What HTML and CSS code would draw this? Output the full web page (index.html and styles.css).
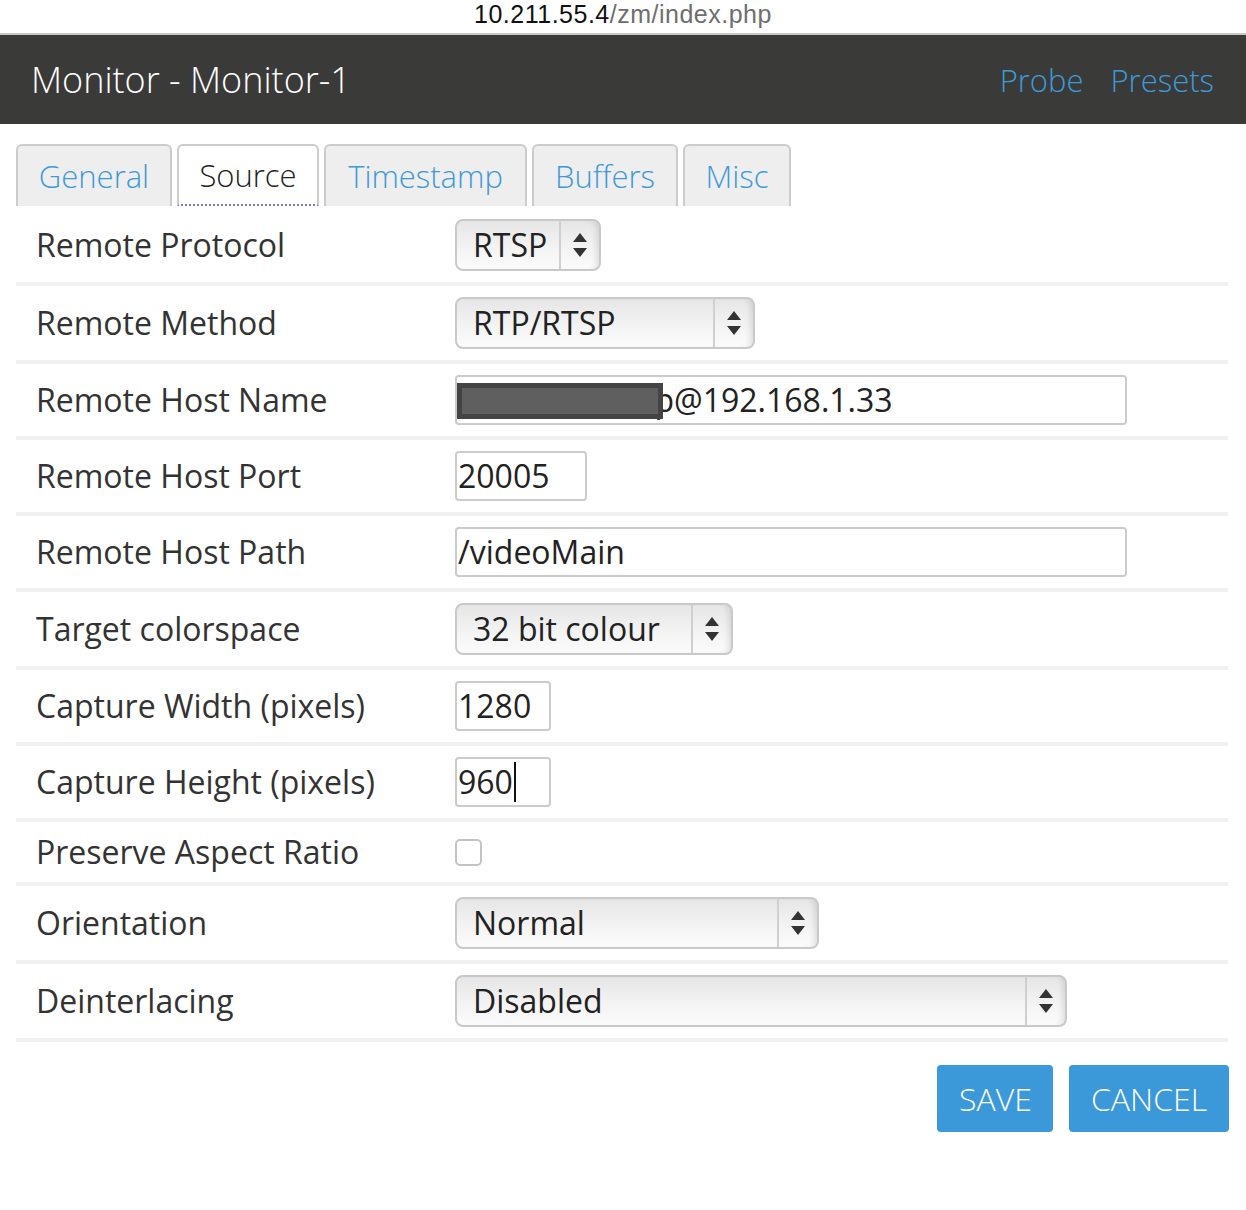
FILE: index.html
```html
<!DOCTYPE html>
<html lang="en">
<head>
<meta charset="utf-8">
<title>Monitor - Monitor-1</title>
<link rel="stylesheet" href="styles.css">
</head>
<body>
<div class="urlbar"><span class="host">10.211.55.4</span><span class="path">/zm/index.php</span></div>
<header class="topbar">
  <h1 class="title">Monitor - Monitor-1</h1>
  <nav class="actions"><a href="#">Probe</a><a href="#">Presets</a></nav>
</header>
<main class="content">
  <ul class="tabs">
    <li class="tab t-general">General</li>
    <li class="tab t-source active">Source</li>
    <li class="tab t-timestamp">Timestamp</li>
    <li class="tab t-buffers">Buffers</li>
    <li class="tab t-misc">Misc</li>
  </ul>
  <div class="rows">
    <div class="row">
      <div class="label">Remote Protocol</div>
      <div class="value"><div class="select w146"><span class="sel-text">RTSP</span><span class="sel-arrows"><svg width="14" height="24" viewBox="0 0 14 24"><path d="M7 0L14 9H0Z M0 15H14L7 24Z" fill="#333"/></svg></span></div></div>
    </div>
    <div class="row">
      <div class="label">Remote Method</div>
      <div class="value"><div class="select w300"><span class="sel-text">RTP/RTSP</span><span class="sel-arrows"><svg width="14" height="24" viewBox="0 0 14 24"><path d="M7 0L14 9H0Z M0 15H14L7 24Z" fill="#333"/></svg></span></div></div>
    </div>
    <div class="row">
      <div class="label">Remote Host Name</div>
      <div class="value"><div class="input w672 redact-wrap"><span class="redacted">p</span>@192.168.1.33<span class="redact-box"></span></div></div>
    </div>
    <div class="row">
      <div class="label">Remote Host Port</div>
      <div class="value"><div class="input w132">20005</div></div>
    </div>
    <div class="row">
      <div class="label">Remote Host Path</div>
      <div class="value"><div class="input w672">/videoMain</div></div>
    </div>
    <div class="row">
      <div class="label">Target colorspace</div>
      <div class="value"><div class="select w278"><span class="sel-text">32 bit colour</span><span class="sel-arrows"><svg width="14" height="24" viewBox="0 0 14 24"><path d="M7 0L14 9H0Z M0 15H14L7 24Z" fill="#333"/></svg></span></div></div>
    </div>
    <div class="row">
      <div class="label">Capture Width (pixels)</div>
      <div class="value"><div class="input w96">1280</div></div>
    </div>
    <div class="row">
      <div class="label">Capture Height (pixels)</div>
      <div class="value"><div class="input w96">960<span class="caret"></span></div></div>
    </div>
    <div class="row short">
      <div class="label">Preserve Aspect Ratio</div>
      <div class="value"><span class="checkbox"></span></div>
    </div>
    <div class="row">
      <div class="label">Orientation</div>
      <div class="value"><div class="select w364"><span class="sel-text">Normal</span><span class="sel-arrows"><svg width="14" height="24" viewBox="0 0 14 24"><path d="M7 0L14 9H0Z M0 15H14L7 24Z" fill="#333"/></svg></span></div></div>
    </div>
    <div class="row">
      <div class="label">Deinterlacing</div>
      <div class="value"><div class="select w612"><span class="sel-text">Disabled</span><span class="sel-arrows"><svg width="14" height="24" viewBox="0 0 14 24"><path d="M7 0L14 9H0Z M0 15H14L7 24Z" fill="#333"/></svg></span></div></div>
    </div>
  </div>
  <div class="buttons">
    <button class="btn save">SAVE</button>
    <button class="btn cancel">CANCEL</button>
  </div>
</main>
</body>
</html>
```
FILE: styles.css
```css
* { box-sizing: border-box; }
html, body { margin: 0; padding: 0; background: #fff; }
body { font-family: "Open Sans", "Liberation Sans", sans-serif; color: #333; }

.urlbar {
  height: 35px;
  border-bottom: 2px solid #c9c9c9;
  text-align: center;
  font-family: "Liberation Sans", Arial, sans-serif;
  font-size: 25px;
  line-height: 28px;
  letter-spacing: 0.5px;
}
.urlbar .host { color: #111; }
.urlbar .path { color: #6e6e6e; }

.topbar {
  height: 89px;
  background: #3a3a39;
  display: flex;
  align-items: center;
  justify-content: space-between;
  padding: 0 32px 0 31px;
}
.title {
  margin: 0;
  font-weight: 300;
  font-size: 36px;
  color: #fff;
}
.actions { display: flex; gap: 27px; }
.actions a {
  color: #3d9ad8;
  text-decoration: none;
  font-size: 31px;
  font-weight: 300;
}

.content { padding: 20px 18px 40px 16px; }

.tabs {
  list-style: none;
  margin: 0;
  padding: 0;
  display: flex;
  gap: 5px;
  height: 62px;
}
.tab {
  height: 62px;
  padding: 0;
  background: #eee;
  border: 2px solid #ccc;
  border-bottom: none;
  border-radius: 6px 6px 0 0;
  color: #3d9ad8;
  font-size: 31px;
  font-weight: 300;
  line-height: 62px;
  display: flex;
  align-items: center;
  justify-content: center;
}
.t-general { width: 156px; }
.t-source { width: 142px; }
.t-timestamp { width: 203px; }
.t-buffers { width: 146px; }
.t-misc { width: 108px; }
.tab.active {
  background: #fff;
  color: #222;
  border-bottom: 2px dotted #7b7bb8;
}

.rows { margin-top: 2px; }
.row {
  display: flex;
  align-items: center;
  padding: 11px 0;
  border-top: 4px solid #f1f1f1;
}
.row:first-child { border-top: none; }
.row:last-child { border-bottom: 4px solid #f1f1f1; }
.row.short { min-height: 64px; }
.label {
  width: 439px;
  padding-left: 20px;
  font-size: 32px;
  line-height: 38px;
  color: #333;
}
.value { display: flex; align-items: center; }

.select {
  height: 52px;
  display: flex;
  align-items: stretch;
  border: 2px solid #c9c9c9;
  border-radius: 8px;
  background: linear-gradient(#e6e6e6, #f4f4f4 60%, #fbfbfb);
  box-shadow: inset -6px 0 6px -4px rgba(0,0,0,0.12);
  font-size: 32px;
  color: #222;
}
.sel-text {
  flex: 1;
  padding-left: 16px;
  line-height: 48px;
}
.sel-arrows {
  width: 40px;
  border-left: 2px solid #cfcfcf;
  display: flex;
  align-items: center;
  justify-content: center;
}
.w146 { width: 146px; }
.w300 { width: 300px; }
.w278 { width: 278px; }
.w364 { width: 364px; }
.w612 { width: 612px; }

.input {
  height: 50px;
  border: 2px solid #cbcbcb;
  border-radius: 4px;
  background: #fff;
  padding-left: 1px;
  font-size: 32px;
  line-height: 46px;
  color: #222;
  display: flex;
  align-items: center;
  white-space: nowrap;
}
.w672 { width: 672px; }
.w132 { width: 132px; }
.w96 { width: 96px; }

.redact-wrap { position: relative; }
.redacted {
  display: inline-block;
  width: 216px;
  text-align: right;
}
.redact-box {
  position: absolute;
  left: 0;
  top: 6px;
  width: 206px;
  height: 36px;
  background: #5f5f5f;
  border: 5px solid #444;
}
.caret {
  display: inline-block;
  width: 2px;
  height: 40px;
  background: #111;
  margin-left: 1px;
}

.checkbox {
  display: inline-block;
  width: 27px;
  height: 27px;
  border: 2px solid #c3c3c3;
  border-radius: 5px;
  background: #fff;
}

.buttons {
  display: flex;
  justify-content: flex-end;
  gap: 16px;
  margin-top: 23px;
  margin-right: -1px;
}
.btn {
  height: 67px;
  border: none;
  border-radius: 4px;
  background: #3b99d9;
  color: #fff;
  font-family: "Open Sans", sans-serif;
  font-weight: 300;
  font-size: 32px;
  padding: 0 22px;
}
.btn.save { width: 116px; }
.btn.cancel { width: 160px; }
```
